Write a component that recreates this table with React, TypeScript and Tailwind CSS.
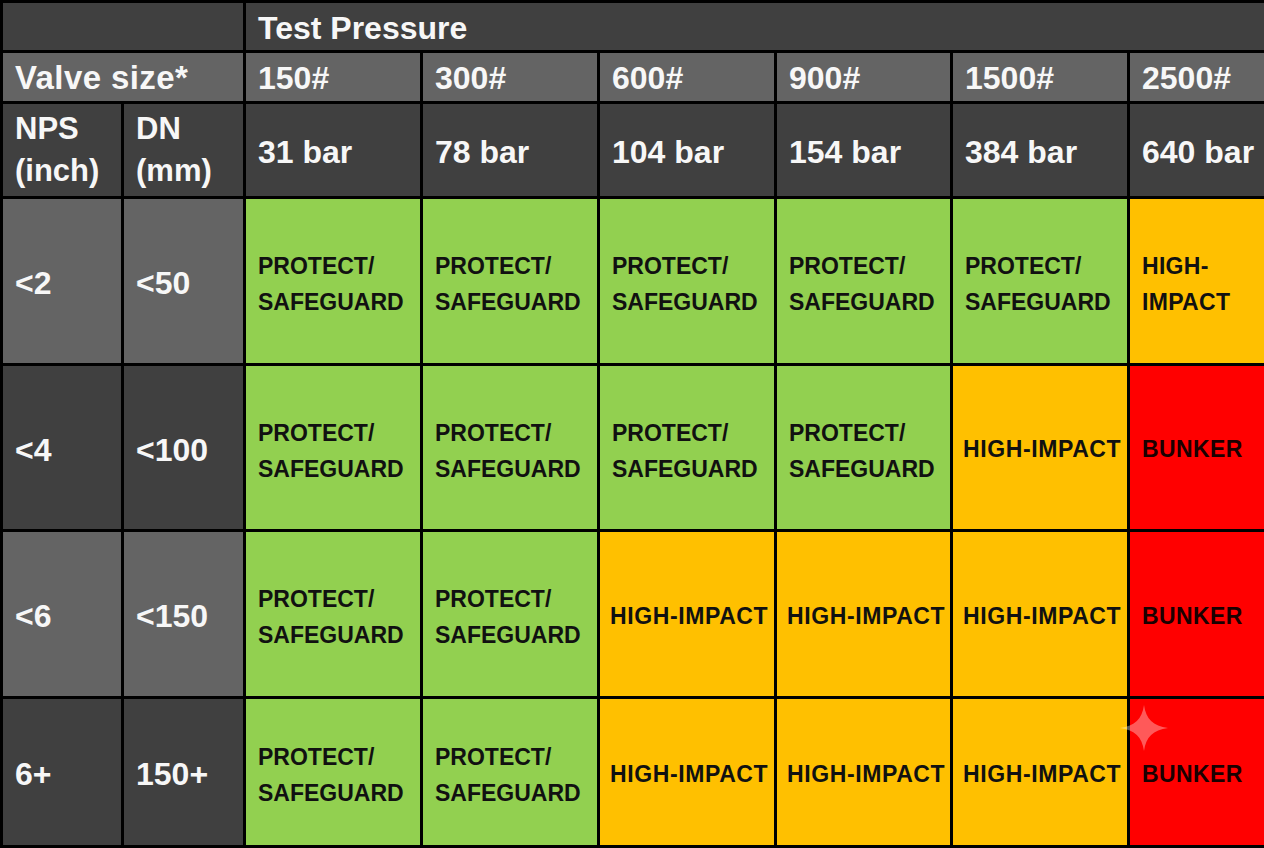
import React from 'react';

type Level = 'protect' | 'high' | 'bunker';

const rows: { nps: string; dn: string; light: boolean; cells: Level[] }[] = [
  { nps: '<2', dn: '<50', light: true, cells: ['protect', 'protect', 'protect', 'protect', 'protect', 'high'] },
  { nps: '<4', dn: '<100', light: false, cells: ['protect', 'protect', 'protect', 'protect', 'high', 'bunker'] },
  { nps: '<6', dn: '<150', light: true, cells: ['protect', 'protect', 'high', 'high', 'high', 'bunker'] },
  { nps: '6+', dn: '150+', light: false, cells: ['protect', 'protect', 'high', 'high', 'high', 'bunker'] },
];

const classes = ['150#', '300#', '600#', '900#', '1500#', '2500#'];
const pressures = ['31 bar', '78 bar', '104 bar', '154 bar', '384 bar', '640 bar'];

const Cell: React.FC<{ level: Level; last: boolean }> = ({ level, last }) => {
  if (level === 'protect') {
    return (
      <div className="bg-[#92d050] flex flex-col justify-center pl-3 pt-[6px] text-[23px] leading-[36px] font-bold text-[#111]">
        <span>PROTECT/</span>
        <span>SAFEGUARD</span>
      </div>
    );
  }
  if (level === 'high') {
    return last ? (
      <div className="bg-[#ffc000] flex flex-col justify-center pl-3 pt-[6px] text-[23px] leading-[36px] font-bold text-[#111] tracking-[0.3px]">
        <span>HIGH-</span>
        <span>IMPACT</span>
      </div>
    ) : (
      <div className="bg-[#ffc000] flex items-center pl-[10px] pt-[4px] text-[23px] font-bold text-[#111] whitespace-nowrap tracking-[0.6px]">
        HIGH-IMPACT
      </div>
    );
  }
  return (
    <div className="bg-[#ff0000] flex items-center pl-3 pt-[4px] text-[23px] font-bold text-[#1a0000] tracking-[0.4px]">
      BUNKER
    </div>
  );
};

const App: React.FC = () => {
  return (
    <div
      className="relative w-[1264px] h-[848px] overflow-hidden bg-black"
      style={{ fontFamily: '"Liberation Sans", Arial, sans-serif' }}
    >
      <div className="grid grid-cols-[118px_119px_174px_174px_174px_173px_174px_1fr] grid-rows-[47px_48px_92px_164px_163px_164px_146px] gap-[3px] pt-[3px] pl-[3px] pb-[3px] h-full text-[#f7f7f7] font-bold">
        {/* Row 1 */}
        <div className="col-span-2 bg-[#404040]" />
        <div className="col-span-6 bg-[#404040] flex items-center pl-3 pt-[2px] text-[32px]">Test Pressure</div>

        {/* Row 2 */}
        <div className="col-span-2 bg-[#646464] flex items-center pl-3 pt-[2px] text-[33px] tracking-[0.4px]">Valve size*</div>
        {classes.map((c) => (
          <div key={c} className="bg-[#646464] flex items-center pl-3 pt-[2px] text-[32px]">
            {c}
          </div>
        ))}

        {/* Row 3 */}
        <div className="bg-[#404040] flex flex-col justify-center pl-3 text-[31px] leading-[42px]">
          <span>NPS</span>
          <span>(inch)</span>
        </div>
        <div className="bg-[#404040] flex flex-col justify-center pl-3 text-[31px] leading-[42px]">
          <span>DN</span>
          <span>(mm)</span>
        </div>
        {pressures.map((p) => (
          <div key={p} className="bg-[#404040] flex items-center pl-3 pt-1 text-[32px] whitespace-nowrap">
            {p}
          </div>
        ))}

        {/* Data rows */}
        {rows.map((r) => (
          <React.Fragment key={r.nps}>
            <div className={`${r.light ? 'bg-[#646464]' : 'bg-[#404040]'} flex items-center pl-3 pt-1 text-[32px]`}>{r.nps}</div>
            <div className={`${r.light ? 'bg-[#646464]' : 'bg-[#404040]'} flex items-center pl-3 pt-1 text-[32px]`}>{r.dn}</div>
            {r.cells.map((lvl, i) => (
              <Cell key={i} level={lvl} last={i === 5} />
            ))}
          </React.Fragment>
        ))}
      </div>

      {/* watermark sparkle */}
      <svg className="absolute left-[1120px] top-[705px]" width="48" height="46" viewBox="0 0 48 46">
        <path
          d="M24 0 C 26 14, 33 21, 48 23 C 33 25, 26 32, 24 46 C 22 32, 15 25, 0 23 C 15 21, 22 14, 24 0 Z"
          fill="white"
          fillOpacity="0.35"
        />
      </svg>
    </div>
  );
};

export default App;
